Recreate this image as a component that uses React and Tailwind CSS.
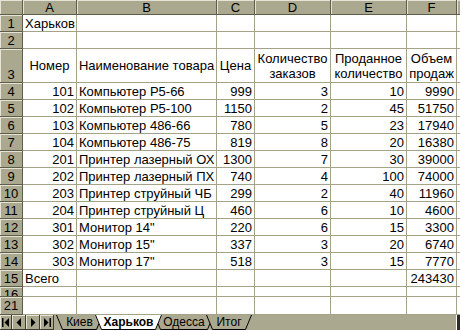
import React from "react";

const GRID = "border-r border-b border-[#a4a38a]";
const HDR =
  "bg-[#aaa88e] border-r border-b border-[#5e5d4a] shadow-[inset_1px_1px_0_#e4e3d6] flex items-center justify-center leading-[15px] overflow-hidden";

const data = [
  ["101", "Компьютер P5-66", "999", "3", "10", "9990"],
  ["102", "Компьютер P5-100", "1150", "2", "45", "51750"],
  ["103", "Компьютер 486-66", "780", "5", "23", "17940"],
  ["104", "Компьютер 486-75", "819", "8", "20", "16380"],
  ["201", "Принтер лазерный ОХ", "1300", "7", "30", "39000"],
  ["202", "Принтер лазерный ПХ", "740", "4", "100", "74000"],
  ["203", "Принтер струйный ЧБ", "299", "2", "40", "11960"],
  ["204", "Принтер струйный Ц", "460", "6", "10", "4600"],
  ["301", "Монитор 14\"", "220", "6", "15", "3300"],
  ["302", "Монитор 15\"", "337", "3", "20", "6740"],
  ["303", "Монитор 17\"", "518", "3", "15", "7770"],
];

function Cell({ children, right, center, className = "" }) {
  return (
    <div
      className={`${GRID} flex items-end px-[2px] leading-[15px] whitespace-nowrap overflow-visible ${
        right ? "justify-end" : center ? "justify-center" : "justify-start"
      } ${className}`}
    >
      {children}
    </div>
  );
}

function RowHead({ children, top }) {
  return (
    <div className={`${HDR} ${top ? "!items-start" : ""}`}>
      <span className={top ? "block h-[9px] overflow-hidden" : ""}>{children}</span>
    </div>
  );
}

function Edge() {
  return <div className="border-b border-[#a4a38a]" />;
}

function NavBtn({ kind }) {
  return (
    <div className="w-[14px] h-[15px] bg-[#aaa88e] border-r border-b border-[#3c3b30] shadow-[inset_1px_1px_0_#e4e3d6] flex items-center justify-center">
      <svg width="8" height="9" viewBox="0 0 8 9">
        {kind === "first" && (
          <>
            <rect x="0" y="0" width="1.5" height="9" fill="#000" />
            <polygon points="7,0 7,9 2.5,4.5" fill="#000" />
          </>
        )}
        {kind === "prev" && <polygon points="6,0 6,9 1.5,4.5" fill="#000" />}
        {kind === "next" && <polygon points="2,0 2,9 6.5,4.5" fill="#000" />}
        {kind === "last" && (
          <>
            <polygon points="1,0 1,9 5.5,4.5" fill="#000" />
            <rect x="6.5" y="0" width="1.5" height="9" fill="#000" />
          </>
        )}
      </svg>
    </div>
  );
}

function Tab({ label, w, active, className = "" }) {
  return (
    <div
      className={`relative h-[15px] flex items-center justify-center shrink-0 ${
        active ? "z-10" : ""
      } ${className}`}
      style={{ width: w }}
    >
      <svg
        className="absolute inset-0"
        width={w}
        height="15"
        viewBox={`0 0 ${w} 15`}
      >
        <polygon
          points={`0,0 ${w},0 ${w - 6},14 6,14`}
          fill={active ? "#ffffff" : "#aaa88e"}
        />
        <polyline
          points={`0.5,0 6.5,14.5 ${w - 6.5},14.5 ${w - 0.5},0`}
          fill="none"
          stroke="#000"
          strokeWidth="1"
        />
      </svg>
      <span
        className={`relative text-[12px] leading-[15px] ${
          active ? "font-bold" : ""
        }`}
      >
        {label}
      </span>
    </div>
  );
}

export default function App() {
  return (
    <div className="w-[460px] h-[330px] overflow-hidden bg-white text-black font-['Liberation_Sans',Arial,sans-serif] text-[13px] flex flex-col">
      <div className="grid grid-cols-[23px_54px_140px_38px_76px_76px_50px_1fr] grid-rows-[15px_17px_17px_34px_repeat(12,17px)_10px_18px]">
        {/* column header */}
        <div className={HDR} />
        {["A", "B", "C", "D", "E", "F"].map((c) => (
          <div key={c} className={HDR}>
            <span>{c}</span>
          </div>
        ))}
        <div className="bg-[#aaa88e] border-b border-[#5e5d4a] shadow-[inset_1px_1px_0_#e4e3d6]" />

        {/* row 1 */}
        <RowHead>1</RowHead>
        <Cell>Харьков</Cell>
        <Cell />
        <Cell />
        <Cell />
        <Cell />
        <Cell />
        <Edge />

        {/* row 2 */}
        <RowHead>2</RowHead>
        <Cell />
        <Cell />
        <Cell />
        <Cell />
        <Cell />
        <Cell />
        <Edge />

        {/* row 3 */}
        <div className={`${HDR} !items-end`}>
          <span>3</span>
        </div>
        <Cell center className="!items-center">Номер</Cell>
        <Cell center className="!items-center">Наименование товара</Cell>
        <Cell center className="!items-center">Цена</Cell>
        <Cell center className="!items-center">
          <div className="text-center">
            Количество
            <br />
            заказов
          </div>
        </Cell>
        <Cell center className="!items-center">
          <div className="text-center">
            Проданное
            <br />
            количество
          </div>
        </Cell>
        <Cell center className="!items-center">
          <div className="text-center">
            Объем
            <br />
            продаж
          </div>
        </Cell>
        <Edge />

        {/* data rows */}
        {data.map((r, i) => (
          <React.Fragment key={r[0]}>
            <RowHead>{i + 4}</RowHead>
            <Cell right>{r[0]}</Cell>
            <Cell>{r[1]}</Cell>
            <Cell right>{r[2]}</Cell>
            <Cell right>{r[3]}</Cell>
            <Cell right>{r[4]}</Cell>
            <Cell right>{r[5]}</Cell>
            <Edge />
          </React.Fragment>
        ))}

        {/* row 15 */}
        <RowHead>15</RowHead>
        <Cell>Всего</Cell>
        <Cell />
        <Cell />
        <Cell />
        <Cell />
        <Cell right>243430</Cell>
        <Edge />

        {/* squished row */}
        <RowHead top>16</RowHead>
        <Cell />
        <Cell />
        <Cell />
        <Cell />
        <Cell />
        <Cell />
        <Edge />

        {/* row 21 */}
        <RowHead>21</RowHead>
        <Cell />
        <Cell />
        <Cell />
        <Cell />
        <Cell />
        <Cell />
        <Edge />
      </div>

      {/* sheet tabs */}
      <div className="h-[15px] bg-[#aaa88e] flex items-start">
        <div className="flex">
          <div className="w-[12px] overflow-hidden flex justify-end">
            <NavBtn kind="first" />
          </div>
          <NavBtn kind="prev" />
          <NavBtn kind="next" />
          <div className="w-[15px]">
            <NavBtn kind="last" />
          </div>
        </div>
        <div className="flex ml-[1px]">
          <Tab label="Киев" w={47} />
          <Tab label="Харьков" w={67} active className="-ml-[8px]" />
          <Tab label="Одесса" w={60} className="-ml-[8px]" />
          <Tab label="Итог" w={46} className="-ml-[8px]" />
        </div>
        <div className="flex-1" />
        <div className="w-[4px] h-[15px] border-l border-white bg-[#2e2d25]" />
      </div>
    </div>
  );
}
